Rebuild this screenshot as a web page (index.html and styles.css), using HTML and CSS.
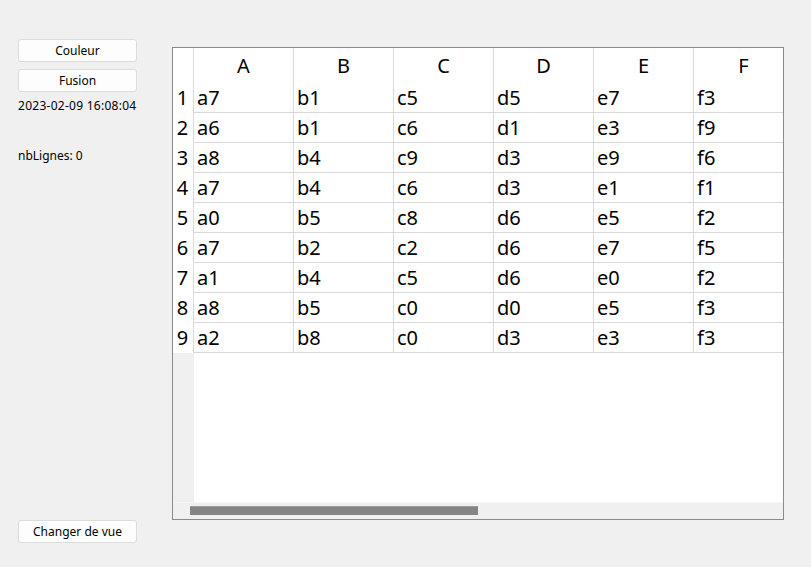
FILE: index.html
```html
<!DOCTYPE html>
<html>
<head>
<meta charset="utf-8">
<link rel="stylesheet" href="styles.css">
</head>
<body>
<div class="app">
  <div class="side">
    <button class="btn">Couleur</button>
    <button class="btn btn-2">Fusion</button>
    <div class="label date">2023-02-09 16:08:04</div>
    <div class="label count">nbLignes: 0</div>
    <div class="spacer"></div>
    <button class="btn">Changer de vue</button>
  </div>
  <div class="frame">
    <div class="view">
      <div class="vhead">
        <div class="corner"></div>
        <div class="rn">1</div>
        <div class="rn">2</div>
        <div class="rn">3</div>
        <div class="rn">4</div>
        <div class="rn">5</div>
        <div class="rn">6</div>
        <div class="rn">7</div>
        <div class="rn">8</div>
        <div class="rn">9</div>
      </div>
      <div class="data">
        <div class="row head">
          <div class="cell">A</div><div class="cell">B</div><div class="cell">C</div><div class="cell">D</div><div class="cell">E</div><div class="cell">F</div>
        </div>
        <div class="row"><div class="cell">a7</div><div class="cell">b1</div><div class="cell">c5</div><div class="cell">d5</div><div class="cell">e7</div><div class="cell">f3</div></div>
        <div class="row"><div class="cell">a6</div><div class="cell">b1</div><div class="cell">c6</div><div class="cell">d1</div><div class="cell">e3</div><div class="cell">f9</div></div>
        <div class="row"><div class="cell">a8</div><div class="cell">b4</div><div class="cell">c9</div><div class="cell">d3</div><div class="cell">e9</div><div class="cell">f6</div></div>
        <div class="row"><div class="cell">a7</div><div class="cell">b4</div><div class="cell">c6</div><div class="cell">d3</div><div class="cell">e1</div><div class="cell">f1</div></div>
        <div class="row"><div class="cell">a0</div><div class="cell">b5</div><div class="cell">c8</div><div class="cell">d6</div><div class="cell">e5</div><div class="cell">f2</div></div>
        <div class="row"><div class="cell">a7</div><div class="cell">b2</div><div class="cell">c2</div><div class="cell">d6</div><div class="cell">e7</div><div class="cell">f5</div></div>
        <div class="row"><div class="cell">a1</div><div class="cell">b4</div><div class="cell">c5</div><div class="cell">d6</div><div class="cell">e0</div><div class="cell">f2</div></div>
        <div class="row"><div class="cell">a8</div><div class="cell">b5</div><div class="cell">c0</div><div class="cell">d0</div><div class="cell">e5</div><div class="cell">f3</div></div>
        <div class="row"><div class="cell">a2</div><div class="cell">b8</div><div class="cell">c0</div><div class="cell">d3</div><div class="cell">e3</div><div class="cell">f3</div></div>
      </div>
    </div>
    <div class="hscroll"><div class="thumb"></div></div>
  </div>
</div>
</body>
</html>
```
FILE: styles.css
```css
html, body {
  margin: 0;
  padding: 0;
  background: #f0f0f0;
  font-family: "Noto Sans", "Open Sans", sans-serif;
  color: #000;
}
.app {
  display: flex;
  align-items: flex-start;
  width: 811px;
  height: 567px;
  overflow: hidden;
}
.side {
  width: 119px;
  margin-left: 18px;
  height: 567px;
  box-sizing: border-box;
  padding: 39px 0 24px;
  display: flex;
  flex-direction: column;
}
.btn {
  height: 23px;
  width: 119px;
  box-sizing: border-box;
  border: 1px solid #dcdcdc;
  border-radius: 3px;
  background: #fdfdfd;
  font-family: inherit;
  font-size: 12px;
  color: #000;
  padding: 0;
  line-height: 20px;
  flex: none;
}
.btn-2 { margin-top: 7px; }
.label {
  font-size: 12px;
  line-height: 18px;
  white-space: nowrap;
}
.date {
  margin-top: 5px;
  letter-spacing: 0.27px;
}
.count { margin-top: 32px; }
.spacer { flex: 1; }

.frame {
  margin-left: 35px;
  margin-top: 47px;
  width: 612px;
  height: 473px;
  box-sizing: border-box;
  border: 1px solid #898b93;
  display: flex;
  flex-direction: column;
  background: #fff;
}
.view {
  height: 454px;
  display: flex;
  overflow: hidden;
  font-size: 20px;
}
.vhead {
  width: 21px;
  flex: none;
  background: #f0f0f0;
}
.corner {
  height: 35px;
  background: #fff;
  border-right: 1px solid #d9d9d9;
}
.rn {
  height: 30px;
  line-height: 30px;
  background: #fff;
  border-right: 1px solid #d9d9d9;
  text-align: center;
  padding-right: 1px;
}
.data {
  flex: none;
  width: 600px;
}
.row {
  display: flex;
  height: 30px;
  box-sizing: border-box;
  border-bottom: 1px solid #d9d9d9;
}
.row.head {
  height: 35px;
  border-bottom: none;
}
.cell {
  width: 100px;
  flex: none;
  box-sizing: border-box;
  border-right: 1px solid #d9d9d9;
  padding-left: 3px;
  line-height: 29px;
  white-space: nowrap;
}
.head .cell {
  text-align: center;
  padding-left: 0;
  line-height: 35px;
}
.hscroll {
  height: 17px;
  box-sizing: border-box;
  background: #f0f0f0;
  border-top: 1px solid #f6f6f6;
  padding: 3px 0 0 17px;
}
.thumb {
  width: 288px;
  height: 9px;
  background: #858585;
  border-top: 1px solid #9c9c9c;
  box-sizing: border-box;
}
```
